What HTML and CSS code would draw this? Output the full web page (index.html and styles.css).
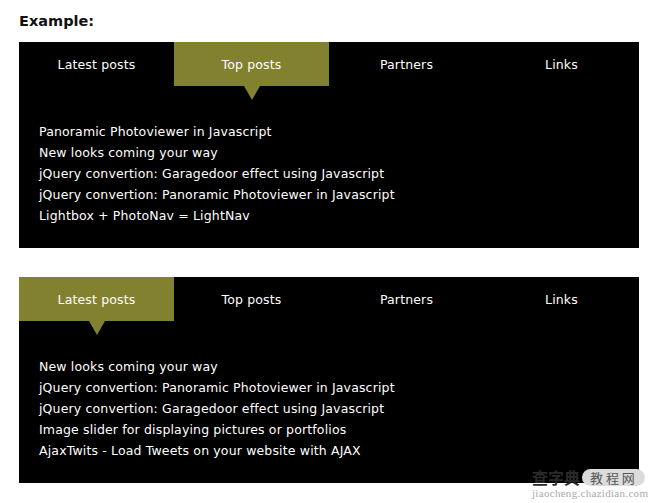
FILE: index.html
```
<!DOCTYPE html>
<html>
<head>
<meta charset="utf-8">
<link rel="stylesheet" href="styles.css">
</head>
<body>
<div class="page">
  <h1 class="title">Example:</h1>
  <div class="box">
    <ul class="tabs">
      <li class="tab">Latest posts</li>
      <li class="tab active">Top posts</li>
      <li class="tab">Partners</li>
      <li class="tab">Links</li>
    </ul>
    <ul class="list">
      <li>Panoramic Photoviewer in Javascript</li>
      <li>New looks coming your way</li>
      <li>jQuery convertion: Garagedoor effect using Javascript</li>
      <li>jQuery convertion: Panoramic Photoviewer in Javascript</li>
      <li>Lightbox + PhotoNav = LightNav</li>
    </ul>
  </div>
  <div class="box second">
    <ul class="tabs">
      <li class="tab active">Latest posts</li>
      <li class="tab">Top posts</li>
      <li class="tab">Partners</li>
      <li class="tab">Links</li>
    </ul>
    <ul class="list">
      <li>New looks coming your way</li>
      <li>jQuery convertion: Panoramic Photoviewer in Javascript</li>
      <li>jQuery convertion: Garagedoor effect using Javascript</li>
      <li>Image slider for displaying pictures or portfolios</li>
      <li>AjaxTwits - Load Tweets on your website with AJAX</li>
    </ul>
  </div>
  <div class="watermark">
    <div class="wm-top"><span class="wm-main">查字典</span><span class="wm-pill">教 程 网</span></div>
    <div class="wm-url">jiaocheng.chazidian.com</div>
  </div>
</div>
</body>
</html>
```
FILE: styles.css
```
html, body {
  margin: 0;
  padding: 0;
  background: #fff;
}
.page {
  position: relative;
  width: 665px;
  height: 503px;
  font-family: "DejaVu Sans", Verdana, sans-serif;
}
.title {
  margin: 0;
  padding: 12px 0 0 19px;
  height: 30px;
  font-size: 14.5px;
  line-height: 18px;
  font-weight: bold;
  color: #111;
}
.box {
  margin-left: 19px;
  width: 620px;
  background: #000;
}
.second {
  margin-top: 29px;
}
.tabs {
  display: flex;
  margin: 0;
  padding: 0;
  list-style: none;
}
.tab {
  position: relative;
  width: 155px;
  height: 44px;
  line-height: 46px;
  text-align: center;
  color: #fff;
  font-size: 12.5px;
  letter-spacing: 0.15px;
}
.tab.active {
  background: #81812f;
}
.tab.active::after {
  content: "";
  position: absolute;
  left: 50%;
  top: 44px;
  margin-left: -8px;
  border-left: 8px solid transparent;
  border-right: 8px solid transparent;
  border-top: 14px solid #81812f;
}
.list {
  margin: 0;
  padding: 34.5px 20px 22.5px;
  list-style: none;
  color: #fff;
  font-size: 12.5px;
  line-height: 21px;
  letter-spacing: 0.15px;
}
.watermark {
  position: absolute;
  left: 532px;
  top: 467px;
  font-family: "Noto Sans CJK SC", sans-serif;
}
.wm-top {
  display: flex;
  align-items: center;
  gap: 2px;
}
.wm-main {
  font-size: 16px;
  line-height: 20px;
  font-weight: bold;
  color: #2a2a2a;
}
.wm-pill {
  font-size: 13px;
  line-height: 17px;
  color: #555;
  background: #dcdcdc;
  border-radius: 9px;
  padding: 0 10px 0 8px;
}
.wm-url {
  font-family: "Liberation Serif", serif;
  font-size: 11px;
  line-height: 13px;
  color: #aaa;
  letter-spacing: 0.3px;
}
```
